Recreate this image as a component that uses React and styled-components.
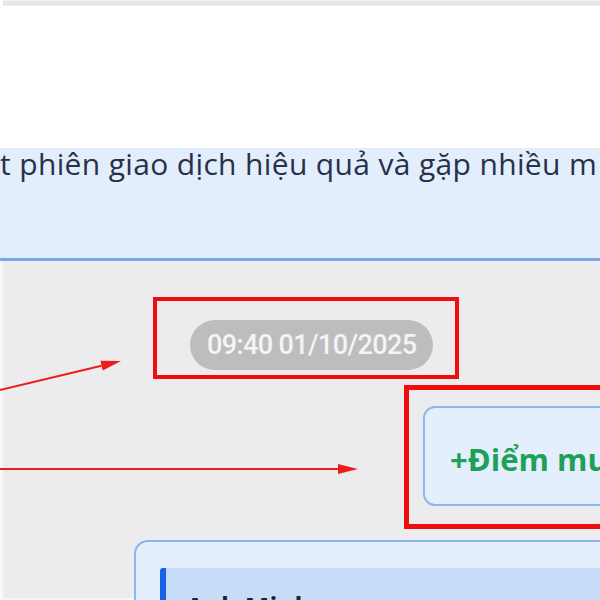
import React from "react";
import styled, { createGlobalStyle } from "styled-components";

const GlobalStyle = createGlobalStyle`
  html, body {
    margin: 0;
    padding: 0;
    background: #ffffff;
  }
  * {
    box-sizing: border-box;
  }
`;

const Page = styled.div`
  width: 600px;
  height: 600px;
  overflow: hidden;
  display: flex;
  flex-direction: column;
  background: #ffffff;
  font-family: "Open Sans", "Liberation Sans", sans-serif;
`;

const TopStrip = styled.div`
  flex: none;
  height: 6px;
  margin-left: 3px;
  background: #e6e6ec;
  border-top: 1px solid #f3f3f6;
  border-bottom: 1px solid #ededf1;
`;

const HeaderSpace = styled.div`
  flex: none;
  height: 142px;
`;

const Banner = styled.div`
  flex: none;
  height: 113px;
  background: #e3eefc;
  border-bottom: 3px solid #7ba7e2;
  overflow: hidden;
`;

const BannerText = styled.div`
  margin-top: -2px;
  font-size: 30px;
  font-weight: 500;
  letter-spacing: 0.35px;
  line-height: 36px;
  color: #28314a;
  white-space: nowrap;
`;

const ChatArea = styled.div`
  position: relative;
  flex: 1;
  min-height: 0;
  display: flex;
  flex-direction: column;
  align-items: flex-start;
  padding-top: 36px;
  background: #ececef;
  border-left: 3px solid #f8f8fa;
  border-bottom: 2px solid #f8f8fa;
`;

const Highlight = styled.div`
  flex: none;
  border: ${({ $thick }) => $thick}px solid #f20d0d;
  padding: ${({ $pad }) => $pad};
  margin-left: ${({ $left }) => $left}px;
  margin-top: ${({ $top }) => $top || 0}px;
  width: ${({ $width }) => ($width ? `${$width}px` : "auto")};
`;

const TimePill = styled.div`
  height: 50px;
  padding: 0 17px;
  border-radius: 25px;
  background: #bdbdbf;
  color: #f4f4f4;
  font-family: Roboto, "Liberation Sans", sans-serif;
  font-size: 27px;
  font-weight: 500;
  letter-spacing: -0.6px;
  line-height: 50px;
  white-space: nowrap;
`;

const ScoreCard = styled.div`
  height: 100px;
  display: flex;
  align-items: center;
  padding: 6px 0 0 25px;
  background: #e4effd;
  border: 2px solid #8db6ec;
  border-radius: 12px;
  overflow: hidden;
`;

const ScoreText = styled.span`
  font-size: 31px;
  font-weight: 700;
  color: #1f9f57;
  white-space: nowrap;
`;

const MessageCard = styled.div`
  flex: none;
  width: 500px;
  height: 120px;
  margin: 11px 0 0 131px;
  padding: 26px 0 0 24px;
  background: #e4effd;
  border: 2px solid #8db6ec;
  border-radius: 14px;
`;

const Quote = styled.div`
  height: 80px;
  padding: 21px 0 0 20px;
  background: #c6dcf7;
  border-left: 6px solid #1663e6;
  border-radius: 3px 0 0 0;
`;

const QuoteName = styled.div`
  font-size: 26px;
  font-weight: 700;
  color: #1c2333;
`;

const Arrows = styled.svg`
  position: absolute;
  left: -3px;
  top: 0;
  width: 600px;
  height: 340px;
  pointer-events: none;
`;

const Arrow = ({ x1, y1, x2, y2 }) => {
  const angle = Math.atan2(y2 - y1, x2 - x1);
  const len = 20;
  const half = 5;
  const bx = x2 - len * Math.cos(angle);
  const by = y2 - len * Math.sin(angle);
  const px = -Math.sin(angle) * half;
  const py = Math.cos(angle) * half;
  return (
    <g>
      <line x1={x1} y1={y1} x2={bx} y2={by} stroke="#ee1c1c" strokeWidth="2" />
      <polygon
        points={`${x2},${y2} ${bx + px},${by + py} ${bx - px},${by - py}`}
        fill="#ee1c1c"
      />
    </g>
  );
};

export default function App() {
  return (
    <>
      <GlobalStyle />
      <Page>
        <TopStrip />
        <HeaderSpace />
        <Banner>
          <BannerText>t phiên giao dịch hiệu quả và gặp nhiều m</BannerText>
        </Banner>
        <ChatArea>
          <Highlight $thick={4} $pad="19px 22px 5px 33px" $left={150}>
            <TimePill>09:40 01/10/2025</TimePill>
          </Highlight>
          <Highlight $thick={5} $pad="16px 0 18px 14px" $left={401} $top={6} $width={320}>
            <ScoreCard>
              <ScoreText>+Điểm mua</ScoreText>
            </ScoreCard>
          </Highlight>
          <MessageCard>
            <Quote>
              <QuoteName>Anh Minh</QuoteName>
            </Quote>
          </MessageCard>
          <Arrows viewBox="0 0 600 340">
            <Arrow x1={-4} y1={130} x2={121} y2={100} />
            <Arrow x1={-4} y1={208} x2={358} y2={208} />
          </Arrows>
        </ChatArea>
      </Page>
    </>
  );
}
